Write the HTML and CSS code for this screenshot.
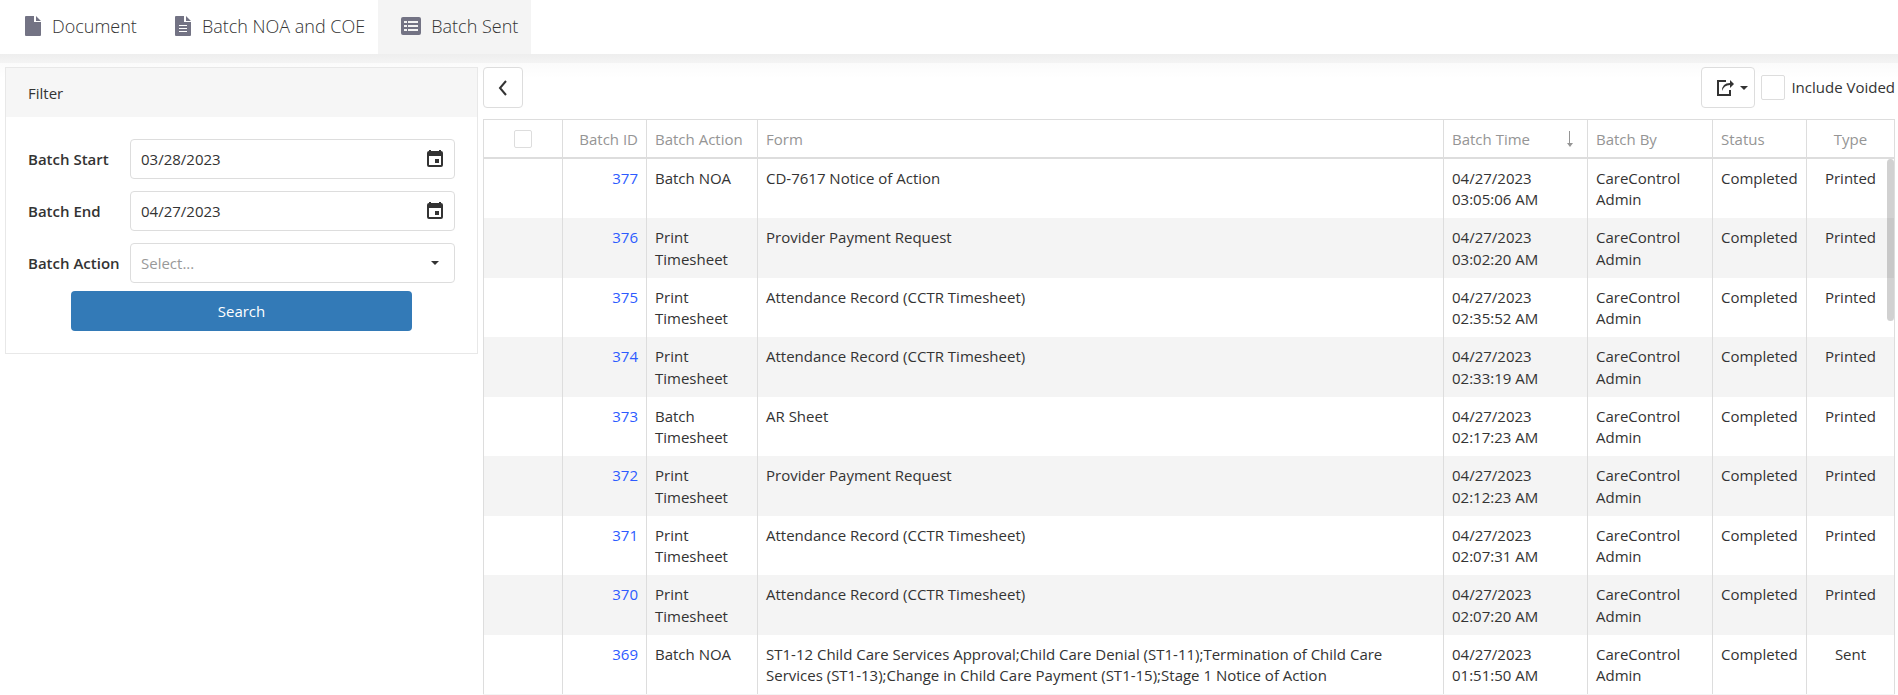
FILE: index.html
```
<!DOCTYPE html>
<html lang="en">
<head>
  <meta charset="UTF-8" />
  <meta name="viewport" content="width=device-width, initial-scale=1" />
  <title>Batch Sent</title>
  <link rel="stylesheet" href="styles.css">
</head>
<body>

<nav class="tabs">
  <a class="tab" href="#">
    <svg width="16" height="20" viewBox="0 0 16 20"><path d="M0 1q0-1 1-1h8v6h7v13q0 1-1 1H1q-1 0-1-1z M11 0l5 5h-5z" /></svg>
    Document
  </a>
  <a class="tab" href="#">
    <svg width="16" height="20" viewBox="0 0 16 20"><path fill-rule="evenodd" d="M0 1q0-1 1-1h8v6h7v13q0 1-1 1H1q-1 0-1-1z M11 0l5 5h-5z M4 9v1h8V9z M4 12v1h8v-1z M4 15v1h8v-1z" /></svg>
    Batch NOA and COE
  </a>
  <a class="tab active" href="#">
    <svg width="20" height="18" viewBox="0 0 20 18"><path fill-rule="evenodd" d="M2 0h16q2 0 2 2v14q0 2-2 2H2q-2 0-2-2V2q0-2 2-2z M3 4v2h3V4z M7 4v2h10V4z M3 8v2h3V8z M7 8v2h10V8z M3 12v2h3v-2z M7 12v2h10v-2z" /></svg>
    Batch Sent
  </a>
</nav>

<div class="content">
  <!-- Filter -->
  <form class="filter">
    <h2>Filter</h2>
    <div class="fields">
      <div class="field">
        <label for="start">Batch Start</label>
        <div class="box">
          <input type="text" id="start" value="03/28/2023" />
          <svg width="16" height="17" viewBox="0 0 16 17"><path fill-rule="evenodd" d="M2 1V0h2v1h8V0h2v1q2 0 2 2v12q0 2-2 2H2q-2 0-2-2V3q0-2 2-2z M2 6v9h12V6z M8 9h4v4H8z" /></svg>
        </div>
      </div>
      <div class="field">
        <label for="end">Batch End</label>
        <div class="box">
          <input type="text" id="end" value="04/27/2023" />
          <svg width="16" height="17" viewBox="0 0 16 17"><path fill-rule="evenodd" d="M2 1V0h2v1h8V0h2v1q2 0 2 2v12q0 2-2 2H2q-2 0-2-2V3q0-2 2-2z M2 6v9h12V6z M8 9h4v4H8z" /></svg>
        </div>
      </div>
      <div class="field">
        <label for="action">Batch Action</label>
        <div class="box">
          <select id="action">
            <option value="">Select...</option>
            <option>Batch NOA</option>
            <option>Print Timesheet</option>
            <option>Batch Timesheet</option>
          </select>
          <svg class="caret" width="8" height="4" viewBox="0 0 8 4"><path d="M0 0h8L4 4z" /></svg>
        </div>
      </div>
      <button type="button" class="search">Search</button>
    </div>
  </form>

  <!-- Results -->
  <main class="results">
    <div class="toolbar">
      <button type="button" class="back" title="Hide filter">
        <svg width="10" height="16" viewBox="0 0 10 16"><path d="M8 1L2 8l6 7" /></svg>
      </button>
      <button type="button" class="export" title="Export">
        <svg width="17" height="17" viewBox="0 0 17 17"><path d="M9 2H1v14h12v-5" fill="none" stroke="#333" stroke-width="2" /><path d="M5 12q0-8 8-8V1l4 4-4 4V6q-6 0-8 6z" /></svg>
        <svg width="8" height="4" viewBox="0 0 8 4"><path d="M0 0h8L4 4z" /></svg>
      </button>
      <label class="voided"><input type="checkbox" /> Include Voided</label>
    </div>

    <div class="grid">
      <table>
        <colgroup>
          <col class="c-check"><col class="c-id"><col class="c-action"><col>
          <col class="c-time"><col class="c-by"><col class="c-status"><col class="c-type">
        </colgroup>
        <thead>
          <tr>
            <th class="center"><input type="checkbox" aria-label="Select all" /></th>
            <th class="right">Batch ID</th>
            <th>Batch Action</th>
            <th>Form</th>
            <th>
              <div class="sorted">Batch Time
                <svg width="6" height="16" viewBox="0 0 6 16"><path d="M2 0h1v12h3l-3 4-3-4h2z" /></svg>
              </div>
            </th>
            <th>Batch By</th>
            <th>Status</th>
            <th class="center">Type</th>
          </tr>
        </thead>
        <tbody>
          <tr><td></td><td class="right"><a href="#">377</a></td><td>Batch NOA</td><td>CD-7617 Notice of Action</td><td>04/27/2023<br>03:05:06 AM</td><td>CareControl Admin</td><td>Completed</td><td class="center">Printed</td></tr>
          <tr><td></td><td class="right"><a href="#">376</a></td><td>Print Timesheet</td><td>Provider Payment Request</td><td>04/27/2023<br>03:02:20 AM</td><td>CareControl Admin</td><td>Completed</td><td class="center">Printed</td></tr>
          <tr><td></td><td class="right"><a href="#">375</a></td><td>Print Timesheet</td><td>Attendance Record (CCTR Timesheet)</td><td>04/27/2023<br>02:35:52 AM</td><td>CareControl Admin</td><td>Completed</td><td class="center">Printed</td></tr>
          <tr><td></td><td class="right"><a href="#">374</a></td><td>Print Timesheet</td><td>Attendance Record (CCTR Timesheet)</td><td>04/27/2023<br>02:33:19 AM</td><td>CareControl Admin</td><td>Completed</td><td class="center">Printed</td></tr>
          <tr><td></td><td class="right"><a href="#">373</a></td><td>Batch Timesheet</td><td>AR Sheet</td><td>04/27/2023<br>02:17:23 AM</td><td>CareControl Admin</td><td>Completed</td><td class="center">Printed</td></tr>
          <tr><td></td><td class="right"><a href="#">372</a></td><td>Print Timesheet</td><td>Provider Payment Request</td><td>04/27/2023<br>02:12:23 AM</td><td>CareControl Admin</td><td>Completed</td><td class="center">Printed</td></tr>
          <tr><td></td><td class="right"><a href="#">371</a></td><td>Print Timesheet</td><td>Attendance Record (CCTR Timesheet)</td><td>04/27/2023<br>02:07:31 AM</td><td>CareControl Admin</td><td>Completed</td><td class="center">Printed</td></tr>
          <tr><td></td><td class="right"><a href="#">370</a></td><td>Print Timesheet</td><td>Attendance Record (CCTR Timesheet)</td><td>04/27/2023<br>02:07:20 AM</td><td>CareControl Admin</td><td>Completed</td><td class="center">Printed</td></tr>
          <tr><td></td><td class="right"><a href="#">369</a></td><td>Batch NOA</td><td>ST1-12 Child Care Services Approval;Child Care Denial (ST1-11);Termination of Child Care Services (ST1-13);Change in Child Care Payment (ST1-15);Stage 1 Notice of Action</td><td>04/27/2023<br>01:51:50 AM</td><td>CareControl Admin</td><td>Completed</td><td class="center">Sent</td></tr>
        </tbody>
      </table>
      <div class="scroll-thumb"></div>
    </div>
  </main>
</div>

</body>
</html>
```
FILE: styles.css
```
:root {
  --text: #333;
  --muted: #959595;
  --border: #ddd;
  --stripe: #f4f4f4;
  --link: #337ab7;
}

* {
  box-sizing: border-box;
}

body {
  margin: 0;
  font-family: "Open Sans", "Noto Sans", sans-serif;
  font-size: 15px;
  line-height: 21px;
  color: var(--text);
  background: #fff;
}

svg {
  flex: none;
  fill: var(--text);
}

input, select, button {
  font: inherit;
  color: inherit;
}

/* Tabs */
.tabs {
  display: flex;
  height: 54px;
}

.tab {
  display: flex;
  align-items: center;
  gap: 11px;
  padding: 0 13px 2px 25px;
  font-size: 18px;
  font-weight: 300;
  color: #333;
  text-decoration: none;
}

.tab svg {
  fill: #737384;
}

.tab.active {
  gap: 10px;
  padding-left: 23px;
  background: var(--stripe);
}

/* Soft shadow under the tabs */
.content {
  display: flex;
  align-items: flex-start;
  gap: 5px;
  padding: 13px 3px 0 5px;
  background: linear-gradient(#eee, #f4f4f4 9px, #fbfbfb 9px, #fff 24px);
}

/* Filter */
.filter {
  flex: none;
  width: 473px;
  border: 1px solid #e8e8e8;
  background: #fff;
}

.filter h2 {
  margin: 0;
  padding: 15px 22px 13px;
  font-size: 15px;
  font-weight: 400;
  background: #f6f6f6;
}

.fields {
  padding: 22px;
}

.field {
  display: flex;
  align-items: center;
  margin-bottom: 12px;
}

.field label {
  width: 102px;
  font-weight: 600;
}

.box {
  position: relative;
  flex: 1;
}

.box input, .box select {
  display: block;
  width: 100%;
  height: 40px;
  padding: 0 10px;
  border: 1px solid var(--border);
  border-radius: 4px;
  background: #fff;
  appearance: none;
}

.box select {
  color: #999;
}

.box svg {
  position: absolute;
  top: 11px;
  right: 12px;
  pointer-events: none;
}

.box .caret {
  top: 18px;
  right: 16px;
}

.search {
  display: block;
  width: 341px;
  height: 40px;
  margin: -4px auto 0;
  border: none;
  border-radius: 4px;
  color: #fff;
  background: var(--link);
}

/* Results */
.results {
  flex: 1;
  min-width: 0;
}

.toolbar {
  display: flex;
  align-items: center;
  margin-bottom: 11px;
}

.back, .export {
  display: flex;
  align-items: center;
  justify-content: center;
  width: 40px;
  height: 41px;
  padding: 0;
  border: 1px solid var(--border);
  border-radius: 4px;
  background: #fff;
}

.back svg {
  fill: none;
  stroke: var(--text);
  stroke-width: 2;
}

.export {
  gap: 6px;
  width: 54px;
  margin-left: auto;
  padding-left: 8px;
}

.voided {
  display: flex;
  align-items: center;
  gap: 6px;
  margin-left: 6px;
}

input[type="checkbox"] {
  width: 18px;
  height: 18px;
  margin: 0;
  border: 1px solid var(--border);
  border-radius: 2px;
  background: #fff;
  appearance: none;
}

.voided input[type="checkbox"] {
  width: 24px;
  height: 25px;
}

.grid {
  position: relative;
  border-top: 1px solid var(--border);
  border-bottom: 1px solid var(--stripe);
}

table {
  width: 100%;
  table-layout: fixed;
  border-spacing: 0;
  border-left: 1px solid var(--border);
}

.c-check { width: 79px; }
.c-id { width: 84px; }
.c-action { width: 111px; }
.c-time { width: 144px; }
.c-by { width: 125px; }
.c-status { width: 94px; }
.c-type { width: 88px; }

th {
  height: 39px;
  padding: 1px 8px 0;
  border-right: 1px solid var(--border);
  border-bottom: 2px solid var(--border);
  font-weight: 400;
  text-align: left;
  white-space: nowrap;
  color: var(--muted);
}

th input {
  display: block;
}

th.center input {
  margin: 0 auto;
}

td {
  height: 59px;
  padding: 9px 8px 8px;
  border-right: 1px solid var(--border);
  vertical-align: top;
}

tbody tr:nth-child(even) td {
  height: 60px;
  padding-top: 8px;
  line-height: 22px;
  background: var(--stripe);
}

.right {
  text-align: right;
}

.center {
  text-align: center;
}

td a {
  color: #2d5bff;
  text-decoration: none;
}

.sorted {
  display: flex;
  align-items: center;
  justify-content: space-between;
  padding-right: 6px;
}

.sorted svg {
  fill: var(--muted);
}

.scroll-thumb {
  position: absolute;
  top: 39px;
  right: 1px;
  width: 7px;
  height: 162px;
  border-radius: 4px;
  background: rgba(0, 0, 0, 0.18);
}
```
